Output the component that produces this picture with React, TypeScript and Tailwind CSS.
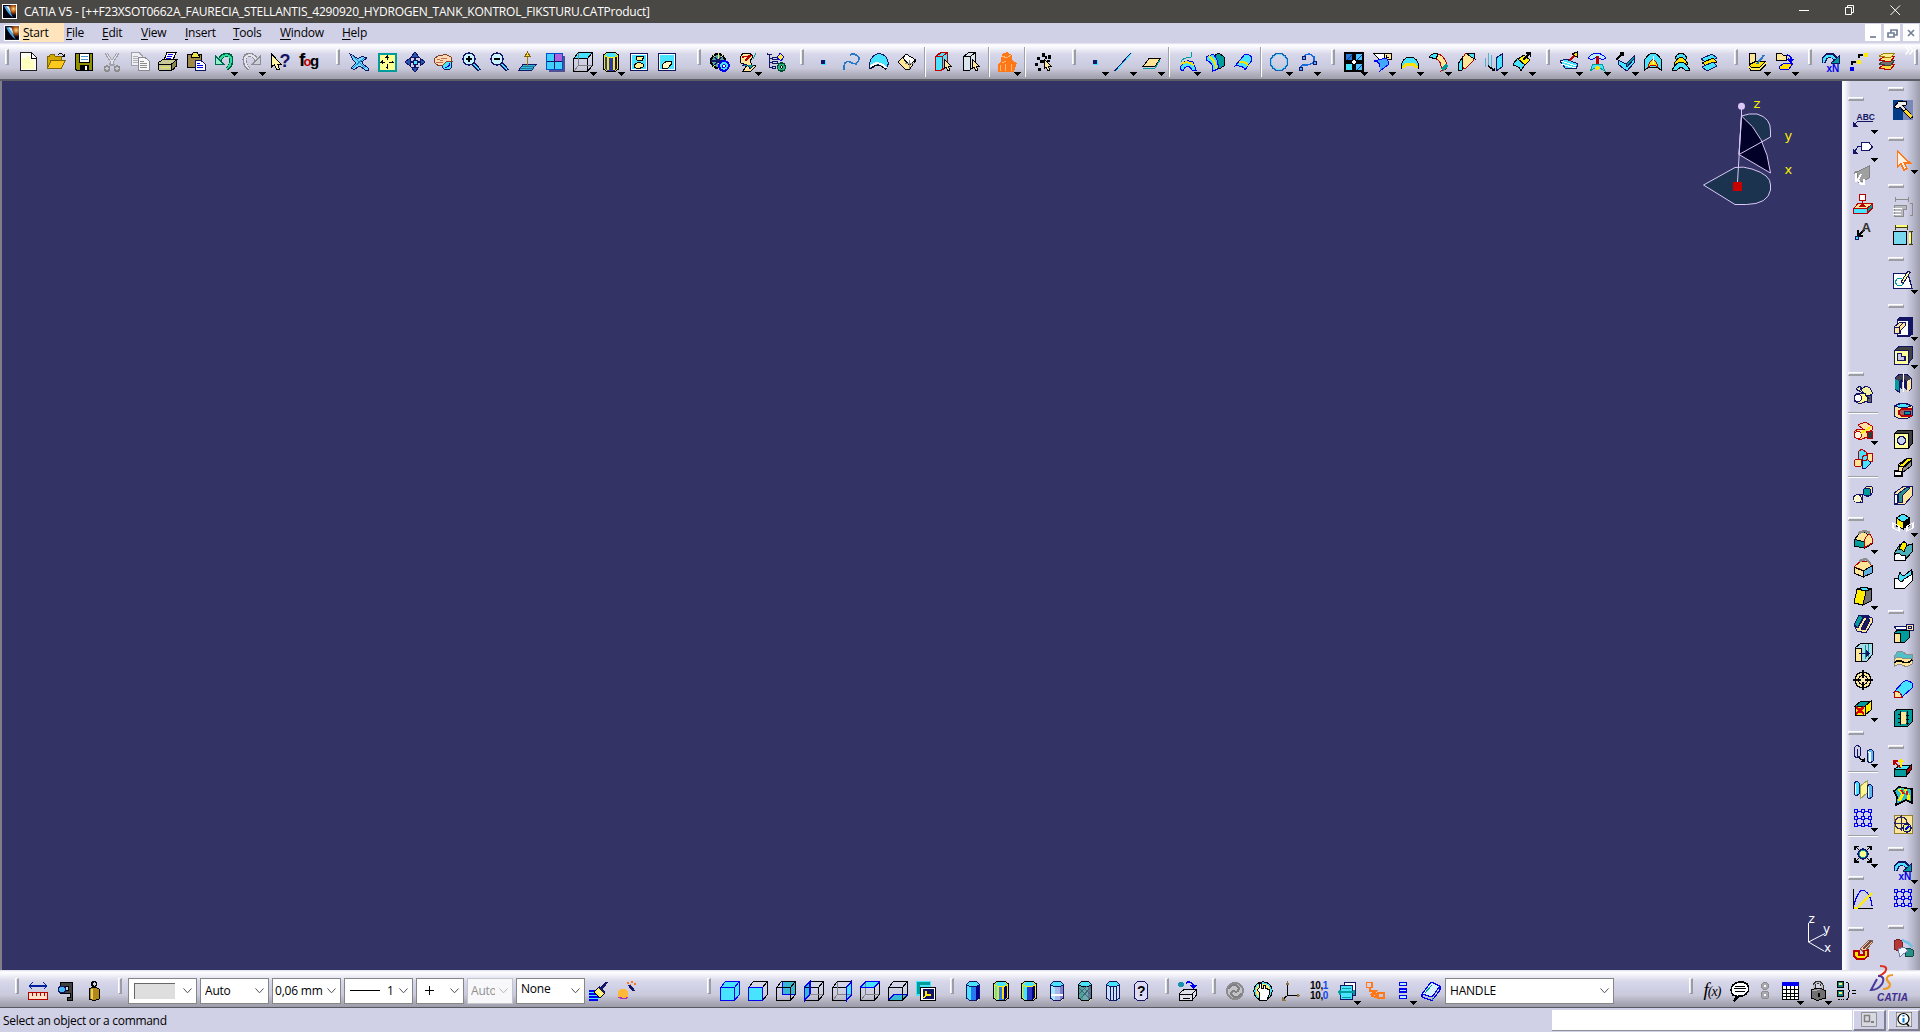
import React from "react";

type Shape = [d: string, fill: string, stroke?: string, width?: number];
type Caption = [text: string, x: number, y: number, size: number, color: string];

const C = "#48e4ff";
const N = "#141464";
const Y = "#fff68c";
const P = "#ffe696";
const T = "#009c9c";
const B = "#0000f0";
const K = "#000000";
const W = "#ffffff";
const R = "#b80000";
const O = "#ff7818";
const G = "#8c8c8c";
const X = "none";

const disc = (cx: number, cy: number, r: number) =>
  `M${cx - r} ${cy}a${r} ${r} 0 1 0 ${r * 2} 0a${r} ${r} 0 1 0 ${-r * 2} 0z`;

const cube = (front: string, top: string, side: string, back: string, edge = K): Shape[] => [
  ["M5.5.5H19.5V14.5H5.5z", back],
  ["M.5 6.5H14.5V19.5H.5z", front],
  ["M.5 6.5L5.5.5H19.5L14.5 6.5z", top],
  ["M14.5 6.5L19.5.5V13.5L14.5 19.5z", side],
  ["M.5 6.5H14.5V19.5H.5zM.5 6.5L5.5.5H19.5L14.5 6.5M19.5.5V13.5L14.5 19.5", X, edge],
];
const hiddenEdges: Shape = ["M5.5 1V13.5H19M5.5 13.5L1 19", X, "#808080"];

const cyl = (l: string, m: string, r: string, edge = N, halo = "#fff090"): Shape[] => [
  ["M5 2H15L17 4V17L14 20H7L4 18z", halo],
  ["M3.5 3V17L6 19.5H13L16.5 17V3z", m],
  ["M3.5 3V17L6 19.5H8V3z", l],
  ["M13 3V19.5L16.5 17V3z", r],
  ["M3.5 3.5L6.5.5H13.5L16.5 3.5L13.5 5.5H6.5z", C, edge],
  ["M3.5 3.5V17L6.5 19.5H13.5L16.5 17V3.5", X, edge],
];

const gridDots: Shape[] = [
  ["M3 3h14v14h-14z M10 3V17 M3 10H17", X, B],
  ...[3, 10, 17].flatMap((x) => [3, 10, 17].map((y): Shape => [disc(x, y, 1.7), "#d0d0e6", B])),
];

const cursor: Shape = ["M11 7V17L13 15L15 19L17 18L15.5 14.5H18.5z", P, K];
const repeatArrow: Shape[] = [
  ["M3 11C2 3 11 0 15 7V9", X, N, 5],
  ["M3 10.5C2 4 10.5 1 14.5 8V9", X, C, 2.5],
  ["M10 11L18.5 4V12z", T, N],
];

const ICONS: Record<string, Shape[]> = {
  new: [["M2.5.5H13L18.5 6V18.5H2.5z", "#fffff4", "#202020"], ["M4 6H9V4H12V8H16V17H4z", "#ffffc0"], ["M13 .5V6H18.5", W, K]],
  open: [["M1.5 17V4H3.5L4.5 2.5H8L9.5 4.5H15V8", "#d2a800", "#806400"], ["M1.5 16.5L5 8.5H19L15.5 16.5z", "#ffc81c", "#806400"], ["M12 2.5Q15 0 18 4M15.500 4.5H18.500V1.5", X, K]],
  save: [["M1.5 1.5H18.5V18.5H3L1.5 17z", "#909000", K], ["M5 1.5H15.500V10H5z", W, K], ["M7 4.5H14M7 7.5H14", X, "#4890d0"], ["M5.5 13H14.5V18.5H5.5z", K], ["M11 14H13V18H11z", W]],
  cut: [["M4 1L12 13.500M16 1L8 13.500", X, "#a0a0a8", 3], ["M4.500 1.500L11.500 12.500M15.500 1.500L8.500 12.500", X, "#e4e4ea"], [disc(5, 16.500, 2.5), X, G, 1.5], [disc(15, 16.500, 2.5), X, G, 1.5]],
  copy: [["M1.5.5H9L12.5 4V13.5H1.5z", "#f0f0f4", "#a0a0a8"], ["M3 4H8M3 6H8M3 8H8M3 10H8", X, "#b0b0b8"], ["M8.5 5.5H15L19.500 9.500V18.5H8.5z", "#f8f8fa", "#888890"], ["M10 9.500H14M10 11.500H17M10 13.500H17M10 15.500H17", X, G]],
  print: [["M6 8L9 .5H18L15 8z", W, K], ["M9.5 2.5H15M8.5 4.5H14M8 6.500H13", X, B], ["M.5 10.500L5 7.500H19L16 11V17L13 18.5H1.500L.5 17z", "#c8c898", K], ["M1 12.5H13L18.5 8", X, K], ["M3 15.5H12", X, "#e8e850", 1.5], ["M13.500 12V18L18.500 14V8z", "#888850", K]],
  paste: [["M1.5 2.5H15.500V15.5H1.5z", "#a08848", K], ["M5.5 3.5L7.5.5H11L13 3.500V5H5.5z", "#ece448", K], ["M9.5 8.5H15L19.5 12.500V18.5H9.5z", W, N], ["M11 11.5H14M11 13.5H17M11 15.5H17", X, B, 1.3]],
  undo: [["M5 10C8 0 18 1 17.500 8C17.500 12 16 14.5 13 17", X, "#005c40", 4], ["M5 10C8 .5 17.500 2 17 8C17 11.500 15.500 14.5 13 16.500", X, "#28e098", 2], ["M1.5 4V12.500H10z", "#90f0c8", "#006850"]],
  redo: [["M15 10C12 0 2 1 2.5 8C2.5 12 4 14.5 7 17", X, "#8c8c94", 4], ["M15 10C12 .5 2.5 2 3 8C3 11.500 4.500 14.5 7 16.500", X, "#e4e4ec", 2], ["M18.5 4V12.500H10z", "#d0d0d8", "#8c8c94"]],
  help: [["M1.5 2V15L4.5 12.5L7 18L9.5 17L7.500 12H11z", "#fff4a0", K]],
  fog: [],
  plane: [["M1 2L9 6.5L13 4.500L18 6L13 9.500L14 12L19 16V18H16L11 14L5 17.500L2 16L7 11L4 8z", "#70d8ff", N], ["M3 3L16 16M15 6L4 16", X, "#208cd0"]],
  fit: [["M1.5 1.5H18.5V18.5H1.5z", "#ffff90", T, 2], ["M10 3V8M10 12V17M3 10H8M12 10H17", X, K], ["M10 3L12 5.5H8zM10 17L12 14.5H8zM3 10L5.5 8V12zM17 10L14.5 8V12z", K]],
  pan: [["M10 1V19M1 10H19", X, N, 2], ["M10 0L14 5H6zM10 20L14 15H6zM0 10L5 6V14zM20 10L15 6V14z", "#2858b0", N], ["M8 8H12V12H8z", C, N]],
  rotate: [[disc(14, 13, 5), C, N], ["M1 7L5 4L13 2.500L18 5L19 9L14 9L10 13L5 13.500L2 11z", "#ffd8b8", "#804020"], ["M4 7L10 9M3 10H10M8 6H14", X, "#c07048"], ["M12 15Q16 16 17 11", X, B]],
  zoomin: [[disc(8, 7, 6), "#c8f4ff", N, 1.5], ["M8 4V10M5 7H11", X, K, 2], ["M12.5 12L18.5 18.5", X, N, 4], ["M12.5 12L18 17.5", X, C, 1.5]],
  zoomout: [[disc(8, 7, 6), "#c8f4ff", N, 1.5], ["M5 7H11", X, K, 2], ["M12.5 12L18.5 18.5", X, N, 4], ["M12.5 12L18 17.5", X, C, 1.5]],
  normal: [["M1.5 18.5L6 12.5H19L14.5 18.5z", "#38b8d8", N], ["M3 16.5H17M5 14.5H18", X, "#1878a0"], ["M10.5 4V14", X, "#a08000", 1], ["M10.5 0L13 4H8z", "#ffe040", "#806000"]],
  multi: [["M4 4H20V20H4z", "#505090"], ["M1.5 1.5H17.5V17.5H1.5z", "#40d0ff", "#0050d0", 1.5], ["M10 2H17V10H10z", "#b060e0"], ["M9.5 2V17M2 9.5H17", X, N]],
  iso: [...cube("none", C, "none", "none"), hiddenEdges],
  shade: [...cyl("#2040c0", "#2838b0", "#101080", "#ffe800", "#ffe800"), ["M2.5 3V17L6 19.5H14L17.5 17V3L14 .5H6z", X, K], ["M7 6V18M13 6V18", X, "#ffe800", 1.5]],
  win1: [["M1.5 1.5H18.5V18.5H1.5z", C, N], ["M2.5 2.5H17.5V17.5H2.5z", X, W], ["M5 13L10 10L14 12V15L9 17L5 15zM7 4L15 4L13 9L8 8z", "#fff090", K]],
  win2: [["M1.5 1.5H18.5V18.5H1.5z", C, N], ["M2.5 2.5H17.5V17.5H2.5z", X, W], ["M5 13L9 9.5H14V12.5L11 16H5z", "#fff8c0", K]],
  gears: [[disc(8, 9, 7), "#50a8a0", K, 2], ["M3 3L13 15M13 3L3 15M8 1V17", X, "#ffe860"], ["M5 5L11 13M11 5L5 13M1 9H15", X, N, 1.5], [disc(14, 14, 4.8), C, B, 2], [disc(14, 14, 1.5), W, B]],
  part: [["M2 6L5 1H12L15 5L12 9L14 13L18 14L13 19H5L9 13L3 11z", P, K], ["M4 5L12 4L7 9", X, R, 1.5], ["M4 14Q9 10 12 17L16 13", T, N], ["M18 1L15 7", X, T]],
  tree: [["M1.5 1V3M1 2H6M3.5 3V16M3.5 6H9M3.5 10H9M3.5 15H8", X, N], ["M6 5H11V7H6zM6 9H11V11H6zM6 14H9V16H6z", "#c8d8ff", N], ["M14 1L18 5L15 9L11 6z", "#ffe840", B], [disc(15.5, 15, 4), "#20b880", "#004c30", 1.5], [disc(15.5, 15, 1.2), W, K]],
  dot: [["M8 8H13V13H8z", C], ["M8 8H12V12H8z", N]],
  curve: [["M3 18Q2 8 9 10Q12 12 15 12Q21 6 15 3Q12 1 9 3", X, "#2878c8", 1.5]],
  surf: [["M.5 11.5Q3 2 10 1.5Q18 2 19.5 11.5L17 17Q13 10 8 13L1 17z", C, N], ["M1 15Q9 7 17 16", X, W, 2], ["M1 17Q9 9 17 18", X, K]],
  box: [["M1 10L9 2L19 8L12 18L8 17z", P, K], ["M9 2L19 8L12 13L6 6z", W, K], ["M12 8V17M8 11H17", X, G]],
  sel1: [["M2.5 4.5L8 .5H14.5V14L8 18.5H2.5z", C, R, 1.5], ["M2.5 4.5H9V18M9 4.5L14 1", X, R], cursor],
  sel2: [["M2.5 4.5L8 .5H14.5V14L8 18.5H2.5z", "#dce4ec", K], ["M2.5 4.5H9V18M9 4.5L14 1", X, K], cursor],
  asm: [["M5 2L10 0L15 3V8L20 11L17 20H1V12L4 9z", O], ["M5 4L10 6L14 3M5 11L9 9M3 13V19M8 12V19M14 12V19", X, "#ffb878"]],
  points: [["M4 5H7V8H4zM9 1H12V5H9zM15 3H18V7H15zM2 11H5V14H2zM7 8H11V11H7zM14 8H17V10H14zM5 16H8V19H5zM12 4H14V7H12z", K], cursor],
  line: [["M2 19L18 1", X, N, 1.5], ["M3 19L19 1", X, C]],
  quad: [["M2 14.5L8 6.5H19L14 14.5z", P, K], ["M2 16H14L19 8", X, T]],
  ext: [["M3 17Q6 6 16 10L19 18H15Q10 10 6 19z", C, B], ["M4 12Q10 8 17 13", X, "#ffe000", 2], ["M14 0V5Q5 6 4 10", X, T]],
  off: [["M7 5L14 1L19 5V14L14 17z", T, K], ["M1 5L8 2Q14 8 13 17L8 19Q9 11 1 8z", C, B], ["M4 4Q11 9 11 17", X, "#ffe000", 2]],
  rev: [["M2 14L12 2Q19 2 19 8L12 18Q10 13 2 14z", C, B], ["M6 10Q13 9 15 14", X, "#ffe000", 2]],
  circle: [[disc(10, 10, 8.5), X, "#1860b0", 1.5], [disc(10, 10, 7.5), X, "#70d8ff"]],
  spline: [["M3 17Q3 12 9 13Q19 12 17 5Q12 -1 6 5", X, "#1868e0", 1.5], ["M2 15H5V18H2zM5 4H8V7H5zM16 9H19V12H16z", "#50b0ff", N]],
  join: [["M1 1H9V9H1z", "#2878d0", K, 1.5], ["M11 1H19V9H11z", "#50c0ff", K, 1.5], ["M1 11H9V19H1z", C, K, 1.5], ["M11 11H19V19H11z", "#50c0ff", K, 1.5], ["M10 8V12M8 10H12", X, W, 1.5], ["M3 8L8 3M13 8L18 3M13 18L18 13", X, "#0040a0"]],
  split: [["M1 1H13L17 6L8 8z", W, K], ["M12 1H19V7H12z", P, K], ["M14 3V5H17", X, K], ["M2 9Q9 9 8 19L16 13Q17 9 14 6z", "#40a8ff", B]],
  arc: [["M1.5 16Q1 6 10 5Q19 6 18.5 16L14 14Q10 11 6 14z", C, K], ["M3 16Q5 12 10 12Q15 12 17 16", X, "#ffe000", 3]],
  fillet: [["M1 5Q8 -1 14 4Q20 10 18 17L13 19Q14 9 8 7z", P, R], ["M1 5Q5 0 10 2L8 7z", C, K], ["M14 18L19 13", X, T, 3]],
  chamfer: [["M2 12L10 1L17 2L18 8L9 17z", P, R], ["M2 12L6 6V18L3 19z", C, K], ["M10 1L18 1L19 7L15 5z", C, K]],
  trans: [["M4 1V14M7 3V17M1 6V15", X, "#50b0d0"], ["M12 6L18 2V15L12 19z", C, N], ["M4 14L10 18", X, K, 1.5], ["M11 19V15L7 19z", K]],
  extrap: [["M1 12L6 6L13 12L9 19Q7 13 1 14z", C, K], ["M6 7L12 3L18 8L13 13z", "#ffee00", K], ["M11 8L18 1M14 1H18.5V5", X, K, 1.5]],
  wave: [["M1 9L7 7L19 12L17 17L6 16z", C, N], ["M2 12L17 16M2 9L17 14", X, W], ["M10 9L16 3", X, R, 1.5], ["M13 2L18 0V5z", "#ffe000", K]],
  sweepa: [["M1 6Q9 -4 19 6L15 8Q10 3 5 8z", "#b8f0ff", B], ["M10 4V14", X, R, 3], ["M3 19L6 12H15L18 19Q10 13 3 19z", C, T], ["M7 16Q10 12 14 16L10 18z", "#ffe000"]],
  sweepb: [["M3 8L11 12L19 4V11L12 19L4 13z", C, N], ["M11 12L19 4V7L12 15z", T, N], ["M1 8L8 1M5 1H8V4", X, K, 1.5]],
  dome: [["M1.5 18V8Q10 -6 18.5 8V18Q10 12 1.5 18z", C, K], ["M5 15Q10 0 15 15Q10 12 5 15z", "#ffe000", R], ["M10 4V12", X, W]],
  loft: [["M4 6Q10 -4 16 6L14 8H6z", C, K], ["M3 12Q10 -1 17 12L14 13Q10 9 6 13z", "#ffe000", K], ["M1 18Q10 2 19 18L15 19Q10 12 5 19z", C, K]],
  stack: [["M2 7L13 2L18 6L8 11z", C, N], ["M3 11L14 6L18 10L8 14z", "#ffe000", K], ["M3 15L14 10L18 14L8 19z", C, N]],
  sheets: [["M2 2L8 1L9 9L3 12z", P, K], ["M2 13L10 9H19L13 15H4z", "#ffe000", K], ["M2 15L4 17H13L19 11", X, "#ffee60", 1.5], ["M2 16L4 18.500H13L19 12.500", X, K], ["M10 12L17 3", X, "#2878c8", 2]],
  flow: [["M1 1H6L8 3H11V8H1z", P, K], ["M4 15L9 11H18L14 17H5z", "#ffe000", B], ["M12 3Q17 3 16 9M13 7L16 10L18 7", X, B, 1.5]],
  repeat: repeatArrow,
  steps: [["M1 15H5V19H1z", B], ["M8 8H12V12H8zM15 1H19V5H15z", "#ffee00"], ["M3 13V10H6M10 6V3H13M5 9L6.5 10L5 11M12 2L13.5 3L12 4", X, K, 1.3]],
  layers: [["M2 16L8 12H18L13 18z", "#ffd840", R], ["M2 12L8 8H18L13 14z", "#707070", "#404040"], ["M2 8L8 4H18L13 10z", "#ffe880", R], ["M2 4L8 1H18L13 6z", "#ffee90", "#a08000"]],
  ruler: [["M1 5H19M4.5 1.5L1 5L4.5 8.5M15.5 1.5L19 5L15.5 8.5", X, "#0020a0", 1.2], ["M.5 11.5H19.5V18.5H.5z", "#ffe0c8", R], ["M4.5 12V15M8.5 12V15M12.5 12V15M16.5 12V15", X, R]],
  caliper: [["M4 1H16V19H11V16H14V12H4V9H12V5H4z", "#404040", K], [disc(6, 8.5, 3.5), "#48b8f0", N]],
  weight: [[disc(10, 3, 2.4), X, K, 1.5], ["M5 8Q10 4 15 8V18Q10 20.5 5 18z", "#b08818", K], ["M8 8V18", X, "#e8cc60", 1.5]],
  brush: [["M0 10H10M0 13H9M0 16H11M0 19H9", X, B, 1.5], ["M0 11.5H10M0 14.5H9M0 17.5H11", X, C, 1.5], ["M5 11L10 6L16 12L11 17z", "#ffee60", K], ["M10 6L16 12M12 8L18 1", X, N, 2.5], ["M8 9L13 14", X, W]],
  ball: [[disc(6, 13, 5.5), "#ffb838"], ["M1.500 16Q6 20 11 16Q8 19 2 16z", "#a020c0", "#b030c0"], ["M12 4L17 10", X, N, 2.5], ["M10 1H12V3H10zM14 0H16V2H14zM17 2H19V4H17zM13 3H14V4H13z", O]],
  c1: cube(C, C, C, C, B),
  c2: [...cube(C, "none", "none", "none"), ["M.5 6.5H14.5V19.5H.5z", C, B, 1.5]],
  c3: [["M6.5.5H19.5V13.5H6.5z", "#38b8d0", B, 1.5], ...cube("none", "none", "none", "none")],
  c4: [["M.5 6.5L6 .5V13L.5 19.5z", "#38b8d0"], ...cube("none", "none", "none", "none"), ["M.5 6.5L6 .5V13L.5 19.5z", X, B, 1.5], ["M6 13.500H19", X, G]],
  c5: [...cube("none", "none", C, "none"), hiddenEdges, ["M14.5 6.5L19.5.5V13.5L14.5 19.5z", X, B, 1.5]],
  c6: [...cube("none", C, "none", "none"), hiddenEdges, ["M.5 6.5L5.5.5H19.5L14.5 6.5z", X, B, 1.5]],
  c7: [["M.5 19.5L5.5 13.5H19.5L14.5 19.5z", "#38b8d0", B, 1.5], ...cube("none", "none", "none", "none")],
  views: [["M.5.5H14.5V5H5V14H.5z", T, C, 1.5], ["M4.5 6.5H19.5V19.5H4.5z", W, K], ["M7 8H18V18H7z", N], ["M10 10V14H15M10 14L8 17", X, "#ffee00", 1.5]],
  y1: cyl(C, "#2878f0", "#000090"),
  y2: [...cyl(C, "#2878f0", "#000090", "#ffee00", "#ffee00"), ["M2.5 3V17L6 19.5H14L17.5 17V3L14 .5H6z", X, K], ["M7 6V18M12 6V18", X, "#ffe000", 1.5]],
  y3: [...cyl(C, "#2838c0", "#000090", "#ffee00", "#ffee00"), ["M2.5 3V17L6 19.5H14L17.5 17V3L14 .5H6z", X, K]],
  y4: [...cyl("#a8e8ff", "#a8b8e8", "#8080c8"), ["M4 13.5H16", X, W, 2]],
  y5: [...cyl("#50a0a0", "#70a8b0", "#607898", K), ["M4 7L15 18M8 6L16 14M16 6L5 18M12 5L4 13", X, "#386870"]],
  y6: [...cyl("#c8e0f8", "#c8e0f8", "#c8e0f8", N, C), ["M7.5 5V19M10.5 5V19M13.5 5V19", X, N]],
  y7: [["M3.5 3.5L6.5.5H13.5L16.5 3.5V17L13.5 19.5H6.5L3.5 17z", "#dcdcf4", N]],
  spin: [["M1.5 12.5L6 8.5H18.5V14L14 19.5H1.5z", "#e0e0ec", K], ["M1.5 13H14V19M14 13L18 9M5 17H12", X, K], [disc(3, 3.5, 3), "#1890b0"], ["M8 2Q12 -1 15 4", X, B, 1.5], ["M12 4H19L15.5 8z", B]],
  swirl: [[disc(10, 10, 8), "#c4c4c8", G, 2], ["M4 8Q6 3 11 4Q15 6 13 10Q10 12 8 9M16 12Q14 17 9 16Q5 14 7 10", X, "#808084", 2]],
  hand: [[disc(10, 10, 8.5), "#ffe860", K, 2.5], [disc(10, 10, 8), X, C, 1.5], ["M6 19V11L4 9L6 7V2H8V7H10V4H12V7H14V8H16V14L14 19z", W, K]],
  axis: [["M6.5 1V14.5H19M6.5 14.5L1 19", X, K, 1.2], ["M4.500 4L6.5 0L8.500 4zM16 12.500L19 14.5L16 16.500zM1 16V20H5z", "#8c7440"]],
  gauge: [["M7 1.500H18V14H7z", W, N], ["M3.5 4.5H15.500V18.5H3.5z", C, N], ["M1 11H18M2.500 8.5V13.5M16.500 8.5V13.5", X, T, 2], ["M5 7H14M5 16H14", X, T]],
  link: [["M1.500 1.500H7V6.500H1.500zM13 12H19V17H13z", X, O, 1.5], ["M4.500 7V10H11L7 13H13M8 9L12 16L6 15", X, O, 2]],
  list: [["M6.5 1.5H13.5V4.5H6.5zM6.5 8H13.5V11H6.5zM6.5 14.5H13.5V17.5H6.5z", "#b8f0ff", B, 1.3]],
  book: [["M1 13L10 1L19 5L11 16z", "#d8f0ff", B, 1.2], ["M1 13V16L11 19.5L19 9V5", X, B, 1.2], ["M4 12L11 4M11 17V19", X, T]],
  chat: [["M3 14Q-1 9 3 4Q10 -2 17 3Q21 9 16 13Q12 16 9 15L4 20L6 15z", W, K, 1.5], ["M5 5H15M4 7.5H16M5 10H15", X, K]],
  lights: [[disc(10, 5, 3.5), "#a8a8b0", G], [disc(10, 14, 4), "#a8a8b0", G], ["M10 4V6M10 13V15", X, W, 2]],
  table: [["M2.5 1.5H18.5V18.5H2.5z", W, K], ["M2 1H19V5H2z", B], ["M6.5 5V18M10.5 5V18M14.5 5V18M3 8.5H18M3 12H18M3 15H18", X, K]],
  lock: [["M6 9V4Q10 -2 14 4V9", X, "#303030", 3], ["M6 9V4Q10 -1 14 4V9", X, "#c0c0c0", 1.2], ["M3.5 8.5L12 7L17.5 10V17L9 19.5L3.5 17z", "#707070", K], ["M4 10L12 8.500M10 12V16", X, "#b0b0b0"], ["M11 12V16", X, K, 2]],
  eq: [["M1.5.5H7.5V6.5H1.5zM1.5 9.5H7.5V15.5H1.5z", "#108888", K], ["M3 2H6V4H3zM3 11H6V13H3z", "#ffee60"], ["M2 18.5H4M5 18.5H6M7 18.5H8", X, K], ["M10 1Q13 1 12 5V8L14 10L12 12V15Q13 18 10 19", X, K], ["M16 9H20M16 12H20", X, K]],
  abc: [["M4 11.5H19.5M4.500 11.5L1 15", X, N], ["M0 12V17H5z", N]],
  flag: [["M8.5 4.5H16L19.5 9L16 12.5H8.5z", W, N], ["M8 8.5H5L2 13", X, N], ["M0 11V16H5z", N]],
  gray3d: [["M4 6L16 0V12L6 17z", "#a0a0a0", "#808080"], ["M3 7V16M8 8L5 14L8 18H11V13", X, W, 2], ["M1 8L3 5L5 8", X, G]],
  stamp: [["M6.5.5H12.5V6.5H6.5z", W, R, 1.5], ["M9.5 7V12", X, R, 1.5], ["M.5 14.5L5 9.5H19.5L14 14.5z", P, R], ["M.5 14.5H14V19.5H.5z", C, R], ["M14 14.5L19.5 9.5V14L14 19.5z", T, R], ["M6 13L9.5 9L13 13z", R]],
  apin: [["M11 8L6 13M5 8V13.500H10", X, K, 2], ["M2.5 14.5H5.5V17.5H2.5z", C, N]],
  boolA: [["M3 4L7 1L9 4L13 1L17 3L19 7V9L15 12L10 8z", "#f0f0a0", N], ["M14 10H18V17H14z", "#606060", N], ["M1 11L5 8L12 8L14 12V16L9 18H5L1 16z", Y, N], [disc(5, 13, 3.5), W, N], ["M3 4L8 7M7 3L11 9M12 10L17 14", X, N, 1.3]],
  boolB: [["M5 4L12 1L19 5V9L15 12L10 8z", "#ffe0a8", R], ["M14 10H19V17H14z", "#383838", R], ["M1 11L5 8L12 8L14 12V16L9 18H5L1 16z", P, R], [disc(5, 14, 3.5), "#fff8e0", R], ["M8 12L18 6", X, "#ffee00", 2]],
  boolC: [["M5 3L9 0L13 3V10H5z", C, R], ["M14 4H19V12H14z", P, R], ["M9 12L14 10L18 14L13 19H9z", C, N], [disc(5, 14, 4), P, R], [disc(12, 9, 2.5), C, R]],
  lump: [["M12 3Q14 0 19 2V8Q18 12 13 11z", P, N], [disc(14, 7, 4), T, N], ["M4 9H9V17H4z", P, N], [disc(4.5, 13.500, 4), "#fff8c8", N]],
  edgefil: [["M1 10L7 3L12 2L19 9V14L12 18L1 16z", P, K], ["M1 9L11 12V18L1 16z", T, K], ["M11 12Q12 6 17 4Q20 8 19 13L11 18z", P, R], ["M5 3L12 1L17 3", X, G, 2.5]],
  cham: [["M1 9L8 3H14L19 8L12 13z", P, R], ["M1 9L10 13V19L1 15z", P, K], ["M10 13L19 8V15L10 19z", "#60b0e0", K], ["M6 3L13 1L18 6", X, G, 2.5]],
  draft: [["M4 3L11 1L18 3L13 5z", C, K], ["M4 3L13 5L10 19L1 17z", "#ffee00", K], ["M13 5L18 3V15L10 19z", "#707070", K]],
  shell: [["M1 11L6 1H14L19 4V9L13 19L4 17z", P, N], ["M1 11L6 1L11 3L5 14z", T, N], ["M8 15L14 4L17 6L12 16z", "#1c1c60", N], ["M5 14L10 3H17", X, N, 1.3]],
  thick: [["M2 6L8 1H19V13L14 19H2z", "#a8dce8", K], ["M2 6H8V19H2z", P, K], ["M12 3V17M15 2V15", X, T], ["M6 11.5H15", X, N, 1.5], ["M13 8L17 11.5L13 15z", N]],
  target: [[disc(10, 10, 8), P, K, 1.5], [disc(10, 10, 4.5), "#ffe8b0", K], ["M10 0V8M10 12V20M0 10H8M12 10H20", X, K, 1.3]],
  remove: [["M2 8L8 3H18L13 8z", T, K], ["M2 8H12V17H2z", "#ffee00", K], ["M12 8L18 3V12L12 17z", "#ffee00", K], ["M3 9L11 16M11 9L3 16", X, "#e00000", 2.5]],
  trans2: [["M1 4L4 1L7 3V12L4 14L1 12zM4 5V13", X, N], ["M14 7L18 5L20 7V17L17 19L14 17z", "#58b8f0", N], ["M15 8L17 9V18", X, W, 1.5], ["M6 14L11 17", X, K, 1.5], ["M12 18V13L8 18z", K]],
  mirror: [["M1 3L4 1L6 3V14L3 16L1 14z", C, N], ["M7 6L14 1V13L7 19z", Y, "#a0a060"], ["M14 6L17 4L19 6V17L16 19L14 17z", "#58b8f0", N], ["M2.5 4V14M15.5 7V17", X, W, 1.5]],
  grid: gridDots,
  scale: [["M3 3L17 17M17 3L3 17", X, K, 1.2], ["M2 6V2.500H6M14 2.500H18V6M2 14V18H6M14 18H18V14", X, K, 1.5], [disc(10, 10, 5), T, N, 1.5], [disc(10, 10, 3), "#ffff90"]],
  graph: [["M.5 0V19.5H20", X, K], ["M1 16Q6 -2 12 2Q18 6 19 17", X, B, 1.2], ["M1 18.5H5L19 4", X, "#ffee00", 2]],
  tube: [["M7 9L16 0H19V3L11 12z", "#ffc8a8", "#806050"], ["M1 11H6V15H11V11L15 10V16L11 19H4L1 16z", "#ffe800", R, 1.5], ["M10 9L18 1", X, "#705040", 2]],
  hammer: [["M0 0H10V20H0z", "#003c88"], ["M10 0H20V20H10z", "#7888b8"], ["M1 7L6 1L14 2L13 5L9 6L5 9z", "#f0f0f0", K], ["M8 6L19 18", X, K, 4], ["M8 6L12 10", X, "#e0e0e0", 2], ["M12 10.500L18.5 17", X, "#ffd820", 3]],
  select: [["M4.5 1V17L8 14L11 20L14 18.5L11.5 13H17z", "#fff0e4", O, 1.5]],
  dimg: [["M2 0V5M15 0V5M2 2.5H15M19 6V19M16.5 6.5H20M16.5 18.5H20", X, G], ["M1 8H13V12H10V19H1z", "#b8b8c0", G], ["M0 11H9M0 14H8M0 17H8", X, W]],
  dim: [["M1.5 1H14M17 8V18", X, "#ffff80", 2], ["M2 0V5M14 0V5M2 2.5H14M18.5 7V19M16 6.5H20M16 19.5H20", X, "#404000"], ["M.5 6.5H13.5V19.5H.5z", "#78d8f0", K]],
  sketch: [["M.5 3.5H15L19 18.5H.5z", W, N, 1.3], [disc(6.5, 12, 3.8), X, T, 1.3], ["M8 12L15 1L17 2.5L10.5 13z", Y, N]],
  pad: [["M4 3L7 .5H19.5V17L16 19.5H4z", N, N], ["M5 4H15V18H5z", W], ["M1 10L7 5L12 5V9L7 14V16H1z", P, N], ["M1 10H6V16M6 10L11 5", X, N]],
  pocket: [["M1.5 5.5L6 1.5H19V14L14.5 19H1.5z", "#404040", N], ["M1.5 5.5H15V19H1.5z", "#ffff9c", N], ["M4.5 8.5H8.5V11.5H12V15.5H4.5z", "#c8c8e4", N, 1.5]],
  shaft: [["M2 5Q5 1 10 1Q15 1 18 5V16L14 19V8H6V19L2 16z", "#404050", N], ["M2 6L6 8V18L2 16z", T], ["M14 8L18 6V16L14 19z", P], ["M6 8L9 6V16L6 14z", N], ["M11 6L14 8V17L11 15z", N], ["M10 0V19", X, W]],
  groove: [["M1 5Q10 -1 19 5V15Q10 21 1 15z", P, N], ["M2 5Q10 0 18 5Q10 9 2 5z", C, N], ["M19 8H9L6 10V13L9 15H19", "#a06060", R, 1.5], ["M11 10H17V13H11z", T, N]],
  hole: [["M1.5 4.5L5 1H19V15L15.5 19H1.5z", "#404040", K], ["M1.5 4.5H15.5V19H1.5z", "#ffff9c", K], [disc(8.5, 11.5, 4), "#c8d4ec", N, 1.5]],
  rib: [["M1 13H5V8L14 1H19L18 9L9 16V19H1z", P, K], ["M6 9L15 1L19 2L10 10z", "#ffee00", K], ["M9 12L18 4V9L9 16z", G, K], ["M1 14H8V18H1z", W, K]],
  slot: [["M1 8L11 1H19V11L12 19H1z", P, N], ["M5 9L14 2L17 3L9 11V17H5z", "#2c9090", N], ["M1 9H4V18H1z", W, N]],
  solidc: [["M3 5L10 1L17 5L10 9z", C, K], ["M3 5L10 9V16L3 13z", "#ffee00", K], ["M10 9L17 5V13L10 16z", K], ["M0 10V15L6 18V13zM20 10V15L14 18V13z", X, W, 1.2]],
  multisec: [["M1 13L5 6Q9 0 12 5L19 3V11L12 19H1z", "#48b0b8", K], ["M6 8Q10 -3 14 3L11 11Q9 8 6 8z", "#ffee00", K], ["M1 14Q6 10 8 14H12V19H1z", W, K]],
  multirem: [["M1 9H5Q7 14 11 9L19 3V12L12 19H1z", W, K], ["M5 9L7 3Q9 8 12 6L18 1V6L11 10Q8 16 5 9z", C, K]],
  split3: [["M1 3H12L16 6H3z", W, N], ["M13 1H20V7H13z", P, N], ["M15 3H18V5H15z", X, N], ["M1 10L5 7H16V15L12 19H1z", T, K], ["M1 10H7V19H1z", P, K]],
  thicksurf: [["M1 8Q5 4 10 7Q15 9 19 5V13Q14 17 9 14Q5 12 1 16z", P, G], ["M1 6L4 1Q9 -1 13 3L19 3V7Q14 9 9 7Q5 5 1 8z", "#50c0c8", G], ["M1 12Q5 8 10 11Q15 13 19 9", X, K, 1.5]],
  closesurf: [["M1 13L10 3Q15 0 19 4V9L9 18Q8 12 1 13z", C, B], ["M1 13Q7 11 9 18H1z", P, R]],
  sew: [["M1 5L5 2H19V15L15 19H1z", T, K], ["M7 5H13V17H7z", P], ["M7 4V18M14 4V18", X, K], ["M5 7H8M5 11H8M5 15H8M13 8H16M13 12H16M13 16H16", X, K]],
  analysis: [["M1 11L8 7H18L14 13H1z", C, K], ["M1 11H13V18L1 18z", T, K], ["M13 13L18 7V12L13 18z", R, K], ["M8 9V3", X, "#ffee00", 1.5], ["M5 4L8 0L11 4z", "#ffee00"], ["M8 10L1 4M1 7V3H5", X, R, 1.3]],
  curvmap: [["M1 5L6 1L19 3V17L13 14L3 19L4 11z", "#28c0d0", K, 1.5], ["M6 3L10 8L6 15M12 3L15 9V14", X, "#ffee00", 3], ["M8 4L11 8M14 5V9", X, "#d01818", 2]],
  measure: [["M1 1H19V19H1z", P, "#908030"], [disc(8, 9, 6), X, "#282860", 1.5], ["M8 1V17M1 9H16", X, "#282860"], [disc(14, 14, 4), "#e8f080", N, 1.3], ["M12 16L16 12", X, B, 1.5]],
  catalog: [["M1 3Q5 0 9 3V11Q5 14 1 11z", "#b83838", "#702020"], ["M9 2Q15 4 20 9", X, "#78c0e8", 3], ["M12 11Q16 9 20 12V18Q16 20 12 18z", "#289088", "#104840"], ["M5 11L11 9L15 13L10 16L7 19z", "#f0f4ff", "#7080a8"]],
};

const CAPTIONS: Record<string, Caption[]> = {
  fog: [["f", 1, 14, 19, K], ["o", 5.5, 14, 13, R], ["g", 12, 14, 15, K]],
  help: [["?", 9.5, 15, 18, N]],
  y7: [["?", 6, 15, 14, K]],
  repeat: [["xN", 5.5, 19.5, 10, B]],
  apin: [["A", 8.5, 10, 13, "#303030"]],
  abc: [["ABC", 3.5, 9.5, 8.5, N]],
};

function Icon({ name }: { name: string }) {
  if (name === "fx")
    return (
      <span className="font-['Liberation_Serif',serif] text-[19px] leading-5 italic tracking-[-1px] text-black">
        f<span className="text-[14px]">(x)</span>
      </span>
    );
  if (name === "dec")
    return (
      <span className="flex flex-col font-['Liberation_Sans',sans-serif] text-[10px] font-bold leading-[9.5px] tracking-[-0.4px] text-black">
        <span>10,<span className="text-blue-700">1</span></span>
        <span>10,<span className="text-blue-700">0</span></span>
      </span>
    );
  return (
    <svg viewBox="0 0 20 20" className="block size-5 overflow-visible" shapeRendering="crispEdges">
      {(ICONS[name] ?? []).map(([d, fill, stroke, width], i) => (
        <path key={i} d={d} fill={fill} stroke={stroke ?? "none"} strokeWidth={width ?? 1} />
      ))}
      {(CAPTIONS[name] ?? []).map(([text, x, y, size, color]) => (
        <text key={text} x={x} y={y} fontSize={size} fill={color} className="font-['Liberation_Sans',sans-serif] font-bold">
          {text}
        </text>
      ))}
    </svg>
  );
}

function Tool({ spec, vertical = false }: { spec: string; vertical?: boolean }) {
  if (spec === "|")
    return vertical ? (
      <span className="flex h-2 w-[30px] shrink-0 items-center">
        <span className="h-0.5 w-full border-b border-white bg-[#a0a0a8]" />
      </span>
    ) : (
      <span className="flex w-2 shrink-0 justify-center">
        <span className="h-[30px] w-0.5 border-r border-white bg-[#a0a0a8]" />
      </span>
    );
  const menu = spec.endsWith("*");
  const narrow = spec.endsWith("~");
  const name = menu || narrow ? spec.slice(0, -1) : spec;
  const cell = vertical ? "h-7 w-[30px]" : narrow ? "h-7 w-[22px]" : "h-7 w-7";
  return (
    <button className={`relative flex shrink-0 items-center justify-center ${cell}`}>
      <Icon name={name} />
      {menu && (
        <svg viewBox="0 0 7 4" className="absolute right-0 bottom-0 h-1 w-[7px]" shapeRendering="crispEdges">
          <path d="M0 0H7L3.5 4z" />
        </svg>
      )}
    </button>
  );
}

const Grip = () => (
  <span className="mb-[10px] h-4 w-1 shrink-0 border-r-2 border-b border-l border-t border-t-white border-r-[#9c9ca4] border-b-[#9c9ca4] border-l-white bg-[#e6e6f0]" />
);

function Group({ tools, className, children }: { tools: string; className: string; children?: React.ReactNode }) {
  return (
    <div className={`flex shrink-0 items-center ${className}`}>
      <Grip />
      <div className="ml-[5px] flex items-center">
        {tools.split(" ").filter(Boolean).map((t, i) => <Tool key={i} spec={t} />)}
      </div>
      {children}
    </div>
  );
}

function SideGroup({ tools, className }: { tools: string; className: string }) {
  return (
    <div className={`flex shrink-0 flex-col ${className}`}>
      <span className="mb-[5px] h-1 w-4 border-t border-r border-b-2 border-l border-t-white border-r-[#9c9ca4] border-b-[#9c9ca4] border-l-white bg-[#e6e6f0]" />
      {tools.split(" ").map((t, i) => <Tool key={i} spec={t} vertical />)}
    </div>
  );
}

function Combo({ className, children, disabled = false }: { className: string; children: React.ReactNode; disabled?: boolean }) {
  return (
    <div
      className={`flex h-[26px] shrink-0 items-center overflow-hidden border text-[12px] whitespace-nowrap ${
        disabled ? "border-[#c4c4cc] bg-[#f8f8fa] text-[#909090]" : "border-[#868686] bg-white text-black"
      } ${className}`}
    >
      <div className="flex min-w-0 flex-1 items-center overflow-hidden">{children}</div>
      <svg viewBox="0 0 9 6" className="mx-1 h-1.5 w-[9px] shrink-0">
        <path d="M.5.5L4.5 4.8L8.5.5" fill="none" stroke={disabled ? "#b8b8b8" : "#505050"} />
      </svg>
    </div>
  );
}

const AppIcon = ({ className }: { className: string }) => (
  <svg viewBox="0 0 15 15" className={className}>
    <defs>
      <radialGradient id="glow" cx="0.8" cy="0.3" r="0.5">
        <stop offset="0" stopColor="#ffd890" />
        <stop offset="0.45" stopColor="#b85c14" />
        <stop offset="1" stopColor="#000010" />
      </radialGradient>
    </defs>
    <path d="M0 0H15V15H0z" fill="#fff" />
    <path d="M1 1H14V14H1z" fill="url(#glow)" />
    <path d="M2 2L7 2.500Q7.500 8 11 13.500Q5 9 2 2z" fill="#4ba6e0" />
    <path d="M4 2L7 2.500L9 9z" fill="#d8f0ff" />
  </svg>
);

const MENUS: [string, string][] = [
  ["File", "w-[36px]"],
  ["Edit", "w-[39px]"],
  ["View", "w-[44px]"],
  ["Insert", "w-[48px]"],
  ["Tools", "w-[47px]"],
  ["Window", "w-[62px]"],
  ["Help", "w-[40px]"],
];

const Label = ({ text }: { text: string }) => (
  <>
    <span className="underline underline-offset-2">{text[0]}</span>
    {text.slice(1)}
  </>
);

function TitleBar() {
  return (
    <header className="flex h-[23px] shrink-0 items-center bg-[#4a4845] text-white">
      <AppIcon className="ml-0.5 size-[15px]" />
      <h1 className="ml-[7px] text-[12px] tracking-[-0.215px] whitespace-nowrap">
        CATIA V5 - [++F23XSOT0662A_FAURECIA_STELLANTIS_4290920_HYDROGEN_TANK_KONTROL_FIKSTURU.CATProduct]
      </h1>
      <svg viewBox="0 0 112 12" className="mr-[19px] mb-[3px] ml-auto h-3 w-[112px]" fill="none" stroke="#fff">
        <path d="M10 6.500H20" />
        <path d="M56.500 3.500H62.500V10.500H56.500zM58.500 3V1.500H64.500V8.500H63" />
        <path d="M101.500 1.500L111 11M111 1.500L101.500 11" />
      </svg>
    </header>
  );
}

function MenuBar() {
  return (
    <nav className="flex h-[19px] shrink-0 items-center bg-[#d0d0e6] text-[12px] tracking-[-0.25px] text-black">
      <AppIcon className="ml-1 size-4" />
      <span className="flex h-full w-[44px] items-center bg-[#ffe4bc] pl-[3px]"><Label text="Start" /></span>
      <div className="ml-0.5 flex">
        {MENUS.map(([m, w]) => <span key={m} className={w}><Label text={m} /></span>)}
      </div>
      <div className="mr-px ml-auto flex gap-[3px]">
        {["M4 11H10", "M3 7H9V11H3zM6 7V4H12V9H9", "M4 4L10 10M10 4L4 10"].map((d) => (
          <span key={d} className="flex h-[17px] w-4 items-center justify-center bg-white">
            <svg viewBox="0 0 14 14" className="size-[14px]"><path d={d} fill="none" stroke="#748098" strokeWidth="1.7" /></svg>
          </span>
        ))}
      </div>
    </nav>
  );
}

const barShade = "bg-[linear-gradient(180deg,#dcdcec_0px,#ffffff_2px,#f8f8fd_4px,#d8d8ea_11px,#d0d0e6_18px,#cacadc_25px,#acacba_32px,#9c9caa_37px)]";

function TopToolbar() {
  return (
    <div className={`flex h-9 shrink-0 items-center pt-px ${barShade}`}>
      <Group className="ml-[5px]" tools="new open save cut copy print paste undo* redo* help fog" />
      <Group className="ml-[14px]" tools="plane fit pan rotate zoomin zoomout normal multi iso* shade* win1 win2" />
      <Group className="ml-[16px]" tools="gears part* tree" />
      <Group className="ml-[10px]" tools="dot curve surf box | sel1 sel2 | asm* | points" />
      <Group className="ml-[15px]" tools="dot* line* quad* | ext* off rev | circle* spline*" />
      <Group className="ml-[10px]" tools="join* split* arc* fillet* chamfer trans* extrap*" />
      <Group className="ml-[10px]" tools="wave* sweepa* sweepb* dome loft stack" />
      <Group className="ml-[11px]" tools="sheets* flow*" />
      <Group className="ml-[9px]" tools="repeat steps layers" />
      <svg viewBox="0 0 9 9" className="mb-[22px] ml-1 size-[9px] shrink-0">
        <path d="M.5.5L4 4.500L.5 8.500M4.500.5L8 4.500L4.500 8.500" fill="none" stroke="#fff" strokeWidth="1.5" />
      </svg>
      <Grip />
    </div>
  );
}

function Compass() {
  return (
    <svg viewBox="0 -10 107 120" className="absolute top-[9px] right-[35px] h-[120px] w-[107px] overflow-visible" fill="none" stroke="#dcc8f8">
      <path d="M3.500 85L35 67.500Q43 66 52 69Q71 75 70.500 85V90Q68 104 46.500 104.500H35z" fill="#1c3350" />
      <path d="M41.500 16Q49 13 57 14Q71 18 70.500 31V37L39 54.500z" fill="#1c3350" />
      <path d="M41.500 16Q66 35 70.500 73L39 54.500z" fill="#000028" />
      <path d="M39 54.500L62.500 41.500M41.500 8V16L37.500 82" />
      <circle cx="41.500" cy="6.300" r="3.500" fill="#dcc8f8" stroke="none" />
      <path d="M33 82H42V91H33z" fill="#c80000" stroke="none" />
      <g className="font-['DejaVu_Sans',sans-serif] text-[13px]" fill="#f8f000" stroke="none">
        <text x="53.500" y="8">z</text>
        <text x="84.500" y="40">y</text>
        <text x="84.500" y="74">x</text>
      </g>
    </svg>
  );
}

function Triad() {
  return (
    <svg viewBox="0 -8 34 50" className="absolute right-[4px] bottom-[15px] h-[50px] w-[34px] overflow-visible" fill="none" stroke="#fff">
      <path d="M4.500 10V29L21 20.500M4.500 29L20 38" />
      <g className="font-['DejaVu_Sans',sans-serif] text-[12px]" fill="#fff" stroke="none">
        <text x="4.500" y="10">z</text>
        <text x="19" y="20">y</text>
        <text x="20" y="39">x</text>
      </g>
    </svg>
  );
}

function Workspace() {
  return (
    <main className="flex h-[891px] shrink-0 border-t-2 border-t-[#5c5c64] bg-[#d0d0e6]">
      <section className="relative w-[1842px] shrink-0 border-l-2 border-[#808088] bg-[#333366]">
        <Compass />
        <Triad />
      </section>
      <aside className="flex flex-1 gap-[10px] bg-[linear-gradient(90deg,#ffffff_0px,#f6f6fc_3px,#d0d0e6_9px,#d0d0e6_64px,#b8b8cc_71px,#9c9cac_78px)] pl-1.5">
        <div className="flex w-[30px] flex-col">
          <SideGroup className="mt-[16px]" tools="abc* flag* gray3d stamp apin" />
          <SideGroup className="mt-[126px]" tools="boolA | boolB* boolC | lump" />
          <SideGroup className="mt-[8px]" tools="edgefil* cham draft* shell thick target remove*" />
          <SideGroup className="mt-[9px]" tools="trans2* | mirror grid* | scale*" />
          <SideGroup className="mt-[8px]" tools="graph" />
          <SideGroup className="mt-[14px]" tools="tube" />
        </div>
        <div className="flex w-[30px] flex-col">
          <SideGroup className="mt-[6px]" tools="hammer" />
          <SideGroup className="mt-[13px]" tools="select*" />
          <SideGroup className="mt-[10px]" tools="dimg dim" />
          <SideGroup className="mt-[8px]" tools="sketch*" />
          <SideGroup className="mt-[10px]" tools="pad* pocket* shaft groove hole rib slot solidc* multisec multirem" />
          <SideGroup className="mt-[17px]" tools="split3 thicksurf closesurf sew" />
          <SideGroup className="mt-[14px]" tools="analysis curvmap measure" />
          <SideGroup className="mt-[9px]" tools="repeat* grid*" />
          <SideGroup className="mt-[13px]" tools="catalog" />
        </div>
      </aside>
    </main>
  );
}

function Logo() {
  return (
    <div className="relative -mt-3 ml-[9px] flex h-[34px] w-[46px] shrink-0 flex-col justify-end">
      <svg viewBox="0 0 46 24" className="h-6 w-[46px] overflow-visible" fill="none">
        <path d="M11 -3Q20 -3 16 3Q13 6 10 7" stroke="#e03020" strokeWidth="2" />
        <path d="M9 7Q17 7 13 15Q9 21 2 21L8 10" stroke="#483898" strokeWidth="2" />
        <path d="M24 6Q17 6 18 11L21 15Q21 20 14 20" stroke="#f09820" strokeWidth="2.200" />
      </svg>
      <span className="ml-2 font-['Liberation_Sans',sans-serif] text-[10px] leading-[9px] font-bold italic tracking-[0.3px] text-[#402c90]">CATIA</span>
    </div>
  );
}

function BottomToolbar() {
  return (
    <div className={`flex h-[37px] shrink-0 items-center pt-1 ${barShade}`}>
      <Group className="ml-[15px]" tools="ruler caliper weight" />
      <div className="ml-[10px] flex shrink-0 items-center gap-[3px] tracking-[-0.2px]">
        <Grip />
        <Combo className="ml-[3px] w-[69px]">
          <span className="ml-[5px] h-4 w-[41px] border-t border-l border-[#686868] bg-[#dedede]" />
        </Combo>
        <Combo className="w-[69px] pl-1">Auto</Combo>
        <Combo className="w-[69px] pl-0.5">0,06 mm</Combo>
        <Combo className="w-[69px] pl-[5px]">
          <span className="mr-[7px] h-px w-[30px] bg-black" />1
        </Combo>
        <Combo className="w-[48px] pl-[8px]">
          <svg viewBox="0 0 9 9" className="size-[9px]"><path d="M4.500 0V9M0 4.500H9" stroke="#000" /></svg>
        </Combo>
        <Combo className="w-[46px] pl-[3px]" disabled>Auto</Combo>
        <Combo className="w-[69px] pl-1"><span className="mb-1">None</span></Combo>
      </div>
      <div className="flex shrink-0"><Tool spec="brush" /><Tool spec="ball" /></div>
      <Group className="ml-[66px]" tools="c1 c2 c3 c4 c5 c6 c7 views" />
      <Group className="ml-[10px]" tools="y1 y2 y3 y4 y5 y6 y7" />
      <Group className="ml-[10px]" tools="spin" />
      <Group className="ml-[10px]" tools="swirl hand axis dec gauge* link list* book">
        <Combo className="w-[169px] pl-1"><span className="tracking-[-0.2px]">HANDLE</span></Combo>
      </Group>
      <Group className="ml-[75px]" tools="fx chat lights~ table* lock* eq" />
      <Logo />
    </div>
  );
}

function StatusBar() {
  return (
    <footer className="flex h-[25px] shrink-0 items-center border-t border-[#585860] bg-[#d0d0e6] text-[12px] text-black">
      <span className="ml-[3px] pt-px tracking-[-0.3px]">Select an object or a command</span>
      <div className="ml-auto h-[21px] w-[300px] border-b border-[#909098] bg-white" />
      <div className="ml-px flex gap-0.5">
        <span className="flex h-[21px] w-[33px] items-center justify-center border-t border-r-2 border-b-2 border-l border-t-white border-r-[#80808c] border-b-[#80808c] border-l-white">
          <svg viewBox="0 0 16 15" className="h-[15px] w-4"><path d="M.5.5H15.500V14.500H.5z" fill="#d8d8e0" stroke="#909098" /><path d="M3.500 3.500H8.500V9.500H3.500z" fill="none" stroke="#808080" strokeWidth="1.500" /><path d="M10 10H13" stroke="#808080" strokeWidth="2" /></svg>
        </span>
        <span className="flex h-[21px] w-[32px] items-center justify-center border-t border-r-2 border-b-2 border-l border-t-white border-r-[#80808c] border-b-[#80808c] border-l-white">
          <svg viewBox="0 0 16 15" className="h-[15px] w-4"><path d="M0 0H16V15H0z" fill="#e8e8e8" stroke="#404040" /><circle cx="7.500" cy="7" r="5.500" fill="#fff" stroke="#000" strokeWidth="1.200" /><path d="M7.500 6V10.500M7.500 3V4.500" stroke="#0078d0" strokeWidth="2" /><path d="M10 11L13 14" stroke="#000" strokeWidth="1.500" /></svg>
        </span>
      </div>
    </footer>
  );
}

export default function App() {
  return (
    <div className="flex h-[1032px] w-[1920px] flex-col overflow-hidden bg-[#d0d0e6] font-['Open_Sans','Noto_Sans',sans-serif]">
      <TitleBar />
      <MenuBar />
      <div className="h-px shrink-0 bg-[#d0d0e6]" />
      <TopToolbar />
      <Workspace />
      <BottomToolbar />
      <StatusBar />
    </div>
  );
}
